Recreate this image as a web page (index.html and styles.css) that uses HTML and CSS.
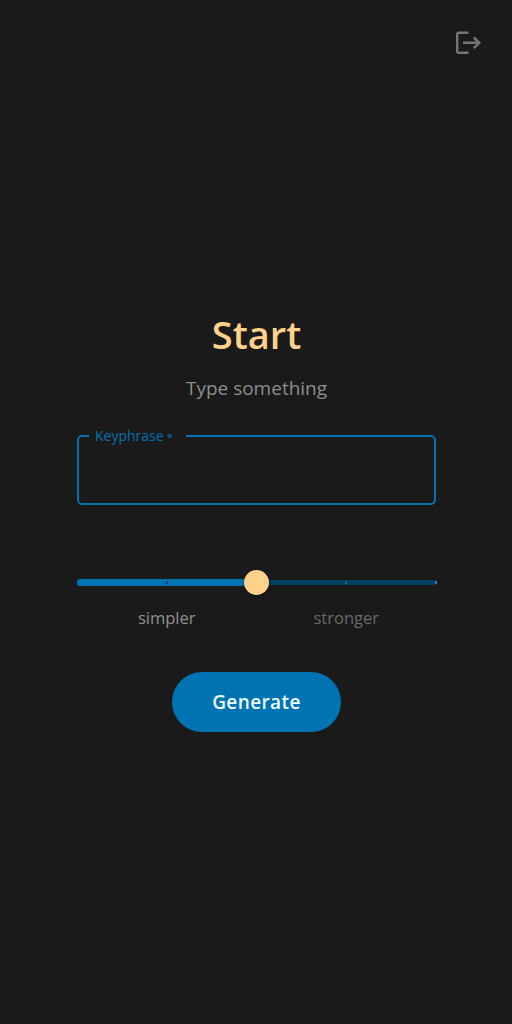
FILE: index.html
```html
<!DOCTYPE html>
<html lang="en">
<head>
<meta charset="utf-8">
<title>Start</title>
<link rel="stylesheet" href="styles.css">
</head>
<body>
<header class="top">
  <button class="exit" aria-label="Sign out">
    <svg width="28" height="26" viewBox="0 0 28 26" fill="none" stroke="currentColor" stroke-width="2.4">
      <path d="M14.5 2.8H4.7Q3.2 2.8 3.2 4.3V21.3Q3.2 22.8 4.7 22.8H14.5M9 12.8H25.5M19.8 7.4L25.3 12.8L19.8 18.2"/>
    </svg>
  </button>
</header>
<main class="panel">
  <h1 class="title">Start</h1>
  <p class="subtitle">Type something</p>
  <fieldset class="field">
    <legend class="legend">Keyphrase<span class="star">*</span></legend>
    <input class="input" aria-label="Keyphrase">
  </fieldset>
  <div class="slider">
    <div class="rail"></div>
    <div class="track"></div>
    <i class="mark mark-quarter"></i>
    <i class="mark mark-three"></i>
    <i class="mark mark-end"></i>
    <div class="thumb"></div>
  </div>
  <div class="labels"><span class="simpler">simpler</span><span class="stronger">stronger</span></div>
  <button class="generate">Generate</button>
</main>
</body>
</html>
```

FILE: styles.css
```css
* { box-sizing: border-box; }
body { margin: 0; min-height: 1024px; background: #1a1a1a; color: #8e8e8e; font-family: "Open Sans", sans-serif; }
.top { height: 86px; display: flex; justify-content: flex-end; padding: 30px 30px 0 0; }
.exit { width: 28px; height: 26px; padding: 0; border: 0; background: none; color: #757575; }
.exit svg { display: block; }
.panel { width: 359px; margin: 222px 0 0 77px; display: flex; flex-direction: column; align-items: center; }
.title { margin: 0; height: 52px; line-height: 52px; font-size: 38px; font-weight: 600; color: #ffd28c; }
.subtitle { margin: 12px 0 0; height: 32px; line-height: 32px; font-size: 19px; font-weight: 400; white-space: nowrap; }
.field { width: 359px; height: 79px; margin: 22px 0 0; align-self: flex-start; padding: 0; border: 2px solid #0072b1; border-radius: 5px; }
.legend { width: 97px; height: 20px; margin-left: 10px; padding: 0 0 0 6px; color: #0072b1; font-size: 14px; line-height: 20px; white-space: nowrap; }
.star { margin-left: 3px; font-size: 11px; }
.input { display: block; width: 100%; height: 50px; border: 0; outline: 0; background: none; color: inherit; font: inherit; }
.slider { position: relative; width: 360px; height: 26px; margin-top: 64px; align-self: flex-start; }
.rail { position: absolute; left: 0; top: 11px; width: 360px; height: 5px; border-radius: 3px; background: #03405f; }
.track { position: absolute; left: 0; top: 10px; width: 180px; height: 7px; border-radius: 3px; background: #0074b3; }
.mark { position: absolute; top: 12px; width: 2px; height: 3px; border-radius: 1px; background: #1c7197; }
.mark-quarter { left: 89px; background: #063f60; }
.mark-three { left: 268px; }
.mark-end { left: 358px; background: #338fba; }
.thumb { position: absolute; left: 167px; top: 1px; width: 25px; height: 25px; border-radius: 50%; background: #ffd28c; box-shadow: 0 1px 3px #0009; }
.labels { width: 359px; height: 30px; margin-top: 8px; display: grid; grid-template-columns: 1fr 1fr; text-align: center; line-height: 30px; font-size: 16.5px; }
.simpler { color: #909090; }
.stronger { color: #686868; }
.generate { width: 169px; height: 60px; margin: 39px 0 0; padding: 0; border: 0; border-radius: 30px; background: #0074b3; color: #edfaff; font: 600 19px/60px "Open Sans", sans-serif; letter-spacing: 0.4px; }
```
